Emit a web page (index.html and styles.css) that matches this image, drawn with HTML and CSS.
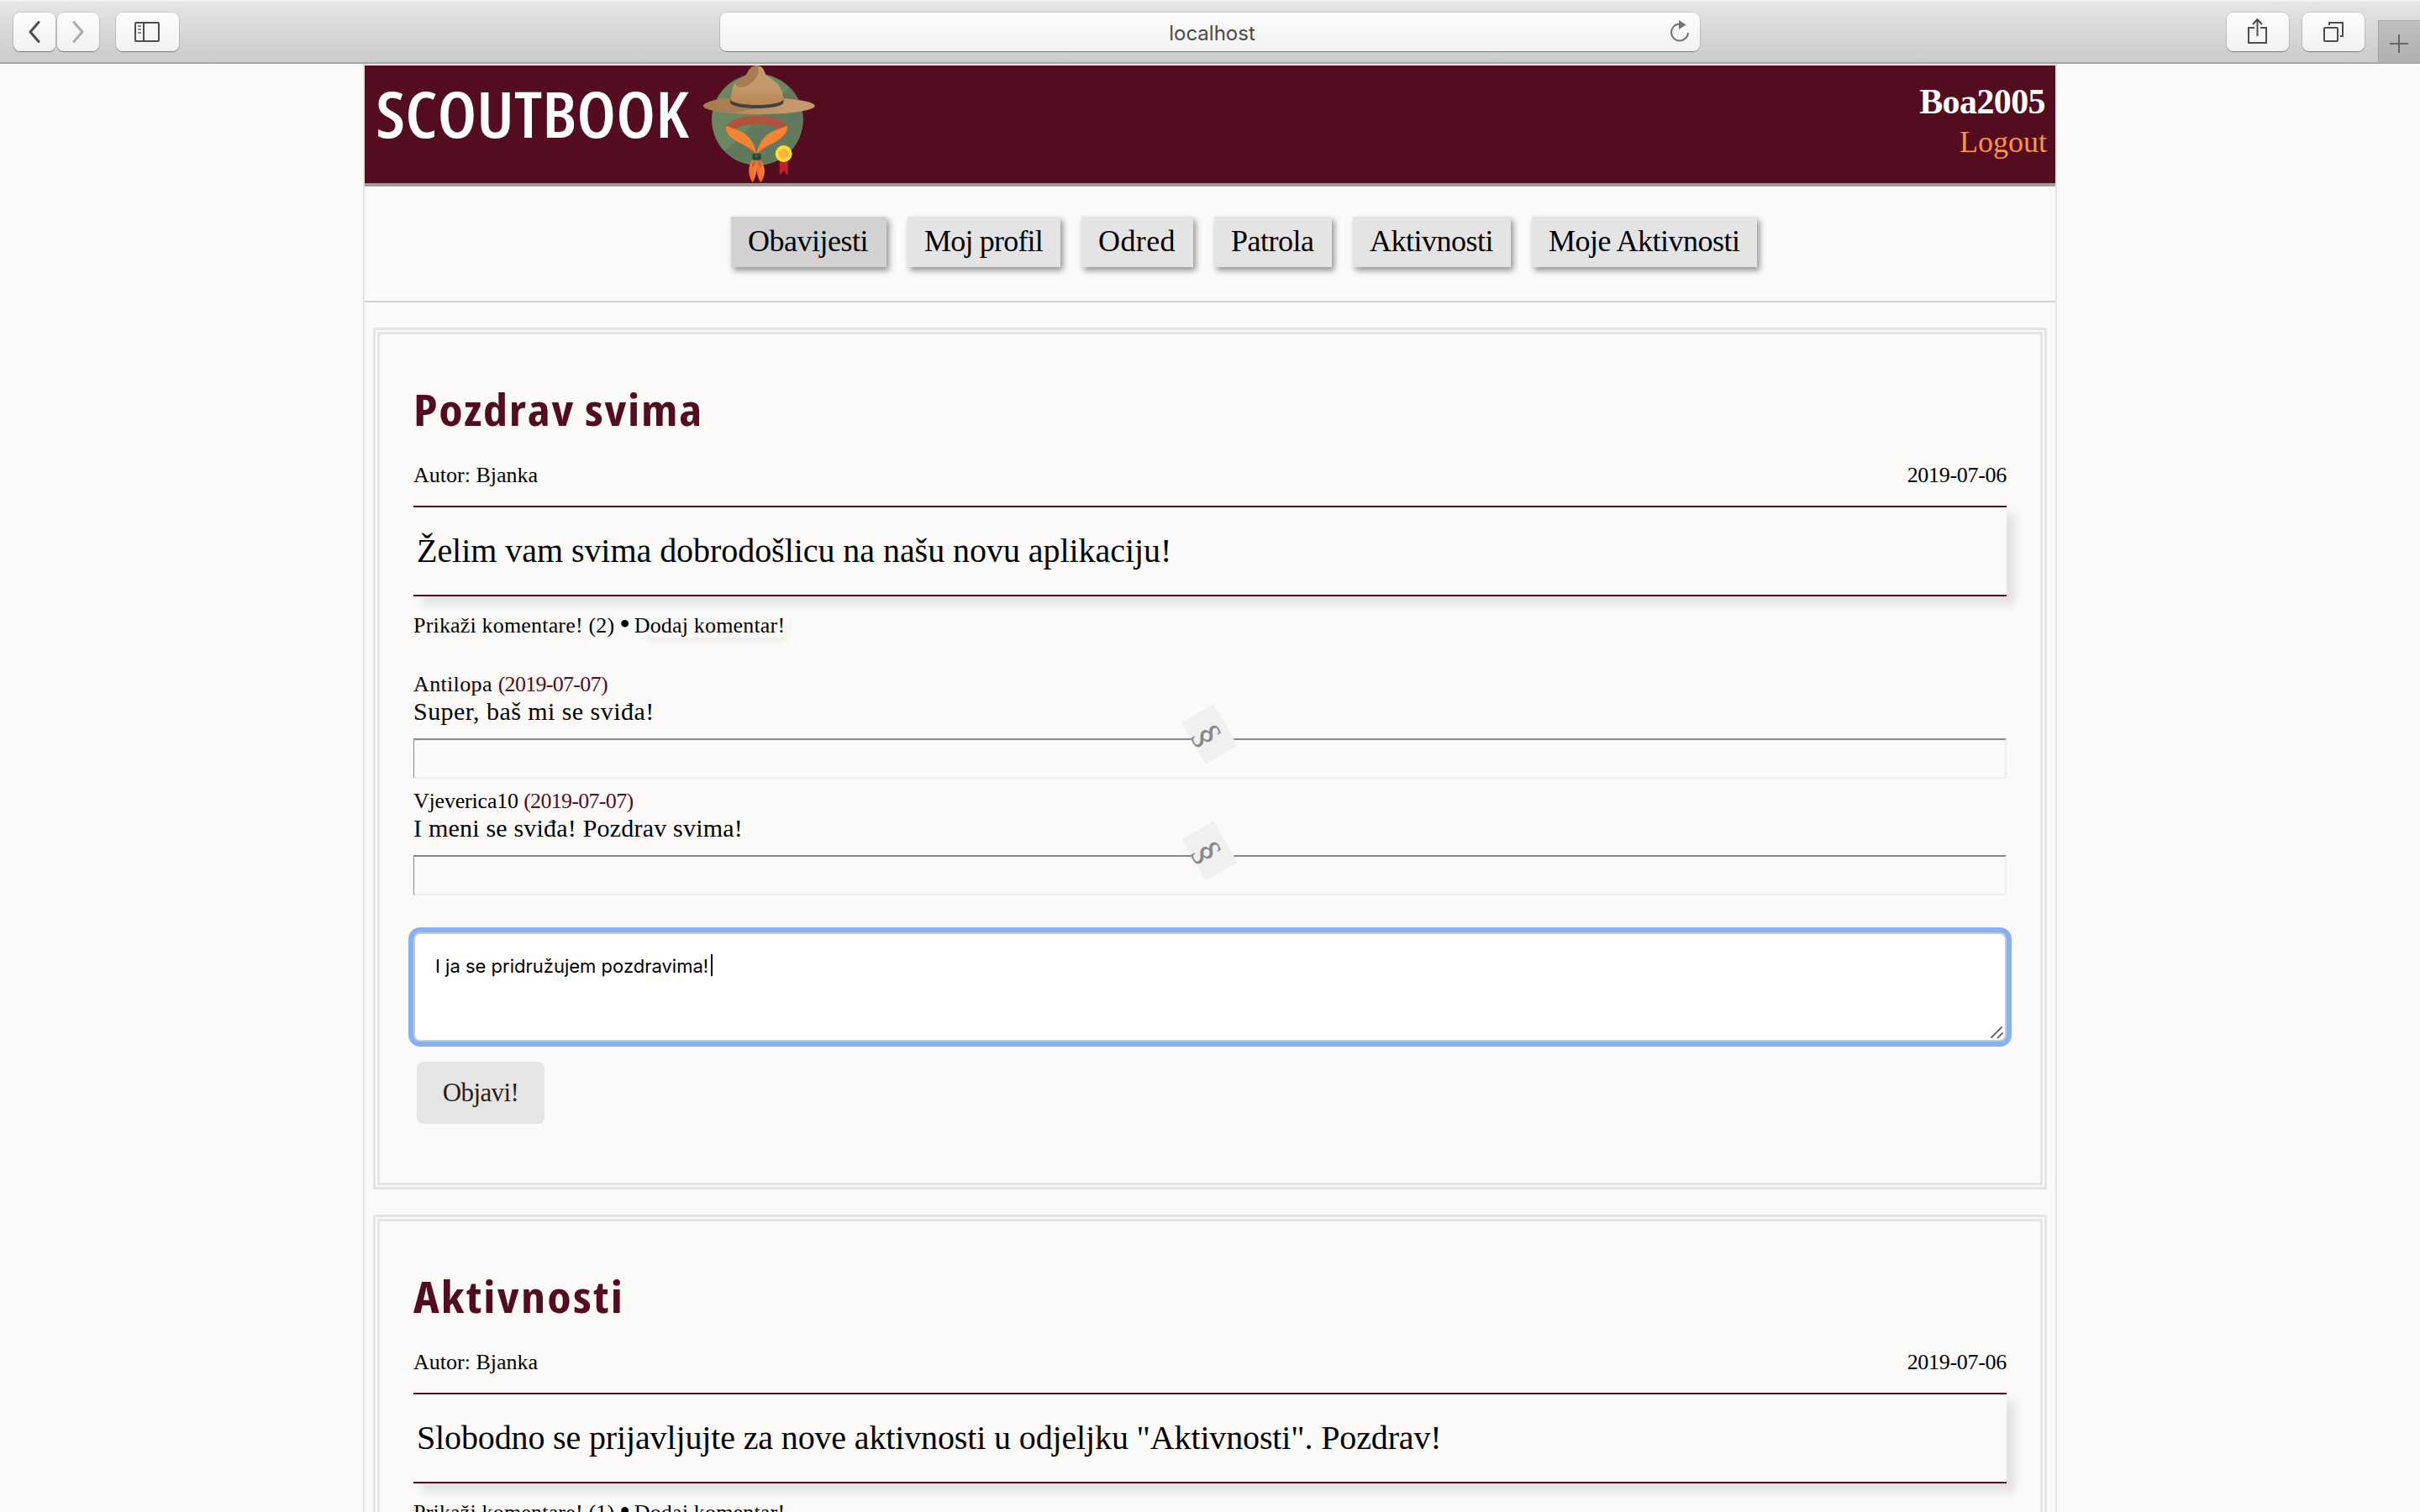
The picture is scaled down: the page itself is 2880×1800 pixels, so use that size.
FILE: index.html
```html
<!DOCTYPE html>
<html lang="hr">
<head>
<meta charset="utf-8">
<title>Scoutbook</title>
<link rel="stylesheet" href="styles.css">
</head>
<body>
<div class="toolbar">
  <div class="toolbar-left">
    <span class="tb-btn nav-arrow"><svg width="50" height="46" viewBox="0 0 50 46"><path d="M30 11.500L20 23L30 34.500" fill="none" stroke="#4d4d4d" stroke-width="3" stroke-linecap="round" stroke-linejoin="round"/></svg></span>
    <span class="tb-btn nav-arrow"><svg width="50" height="46" viewBox="0 0 50 46"><path d="M20 11.500L30 23L20 34.500" fill="none" stroke="#ababab" stroke-width="3" stroke-linecap="round" stroke-linejoin="round"/></svg></span>
    <span class="tb-btn sidebar-btn"><svg width="75" height="46" viewBox="0 0 75 46"><rect x="23" y="12" width="28" height="22" rx="1" fill="none" stroke="#4d4d4d" stroke-width="2"/><path d="M33 12V34" stroke="#4d4d4d" stroke-width="2"/><path d="M26 16h4M26 20h4M26 24h4" stroke="#8a8a8a" stroke-width="2"/></svg></span>
  </div>
  <div class="url">
    <span>localhost</span>
    <svg class="reload" width="24" height="28" viewBox="0 0 24 28"><path d="M12 4.500A10 10 0 1 0 22 15" fill="none" stroke="#737373" stroke-width="2"/><path d="M11 0L19.500 5.500L11 11Z" fill="#737373"/></svg>
  </div>
  <div class="toolbar-right">
    <span class="tb-btn"><svg width="74" height="46" viewBox="0 0 74 46"><path d="M33 18H26V36H47V18H40M36.500 28V8M31 14L36.500 8L42 14" fill="none" stroke="#4d4d4d" stroke-width="2"/></svg></span>
    <span class="tb-btn"><svg width="74" height="46" viewBox="0 0 74 46"><rect x="26" y="18" width="16" height="16" rx="1" fill="none" stroke="#4d4d4d" stroke-width="2"/><path d="M32 15V12H48V28H45" fill="none" stroke="#4d4d4d" stroke-width="2"/></svg></span>
    <span class="new-tab"><svg width="24" height="24" viewBox="0 0 24 24"><path d="M12 1V23M1 12H23" stroke="#666" stroke-width="2"/></svg></span>
  </div>
</div>

<div class="page">
  <header class="header">
    <div class="brand">
      <span class="logo-text">SCOUTBOOK</span>
      <svg class="emblem" width="133" height="140" viewBox="52 54 399 420">
        <defs>
          <linearGradient id="crown" x1="0" y1="0" x2="0" y2="1"><stop offset="0.5" stop-color="#c49a6c"/><stop offset="1" stop-color="#b98556"/></linearGradient>
          <linearGradient id="brim" x1="0" y1="0" x2="1" y2="0"><stop offset="0.3" stop-color="#b98a5c"/><stop offset="0.8" stop-color="#c49a6c"/></linearGradient>
          <linearGradient id="tail" x1="1" y1="0" x2="0" y2="1"><stop offset="0.3" stop-color="#f58235"/><stop offset="1" stop-color="#f15633"/></linearGradient>
          <clipPath id="disc"><circle cx="245" cy="247" r="163"/></clipPath>
        </defs>
        <circle cx="245" cy="247" r="163" fill="#6b8760"/>
        <path d="M358 134L130 360L250 474H451V134Z" fill="#63795b" clip-path="url(#disc)"/>
        <ellipse cx="251" cy="198" rx="199" ry="30" fill="url(#brim)"/>
        <path d="M52 198C56 184 96 172 160 170L240 208L170 223C110 221 55 212 52 198Z" fill="#a87d52"/>
        <path d="M149 182C152 150 157 128 166 115C182 103 200 96 207 85C216 68 222 55 243 55C264 55 268 70 274 84C286 100 307 106 321 122C332 138 337 160 339 182C318 204 171 204 149 182Z" fill="url(#crown)"/>
        <path d="M166 115C182 103 200 96 207 85C216 68 222 52 246 57C254 74 246 94 230 110C210 130 186 136 174 130C167 126 166 120 166 115Z" fill="#a87d52"/>
        <path d="M148 174C158 202 329 202 339 174L338 188C322 213 166 213 148 188Z" fill="#414042"/>
        <path d="M132 277C150 219 330 219 353 276L326 282C290 258 205 257 160 282Z" fill="#b0533c"/>
        <path d="M135 269C150 277 196 286 216 312C230 330 238 348 242 370C222 346 190 336 165 320C142 304 126 287 135 269Z" fill="#f58235"/>
        <path d="M350 269C335 277 288 286 269 312C254 330 245 348 242 370C262 346 295 336 320 320C342 304 357 287 350 269Z" fill="#f58235"/>
        <path d="M205 342Q228 350 240 369Q220 355 205 342M279 342Q256 350 244 369Q264 355 279 342" fill="#dc6c32"/>
        <path d="M230 388C214 405 206 440 228 472C238 455 246 430 243 390Z" fill="url(#tail)"/>
        <path d="M254 388C270 405 280 440 257 472C246 455 238 430 242 390Z" fill="url(#tail)"/>
        <path d="M232 392Q220 404 228 421Q240 410 238 392M253 392Q266 404 258 421Q246 410 247 392" fill="#d4622f"/>
        <rect x="227" y="368" width="31" height="24" rx="5" fill="#1f4d3d"/>
        <circle cx="242" cy="376" r="6" fill="#54595b"/>
        <path d="M324 392H354V448L339 430L324 448Z" fill="#c01f2f"/>
        <circle cx="339" cy="369" r="30" fill="#ffde32"/>
        <circle cx="339" cy="369" r="18" fill="#fbb040"/>
      </svg>
    </div>
    <div class="user">
      <span class="user-name">Boa2005</span>
      <a class="logout">Logout</a>
    </div>
  </header>

  <nav class="nav">
    <a class="nav-item active w1">Obavijesti</a>
    <a class="nav-item w2">Moj profil</a>
    <a class="nav-item w3">Odred</a>
    <a class="nav-item w4">Patrola</a>
    <a class="nav-item w5">Aktivnosti</a>
    <a class="nav-item w6">Moje Aktivnosti</a>
  </nav>

  <main class="feed">
    <article class="post">
      <h2 class="title">Pozdrav svima</h2>
      <div class="meta"><span>Autor: Bjanka</span><span class="date">2019-07-06</span></div>
      <div class="body">Želim vam svima dobrodošlicu na našu novu aplikaciju!</div>
      <div class="links"><a>Prikaži komentare! (2)</a> <b class="dot">•</b> <a class="add hover">Dodaj komentar!</a></div>
      <div class="comments">
        <div class="comment">
          <div class="who">Antilopa <span class="when">(2019-07-07)</span></div>
          <div class="text">Super, baš mi se sviđa!</div>
          <div class="rule"><span class="ornament">§</span></div>
        </div>
        <div class="comment">
          <div class="who tight">Vjeverica10 <span class="when">(2019-07-07)</span></div>
          <div class="text narrow">I meni se sviđa! Pozdrav svima!</div>
          <div class="rule"><span class="ornament">§</span></div>
        </div>
      </div>
      <div class="textarea"><span>I ja se pridružujem pozdravima!</span><i class="caret"></i>
        <svg class="grip" width="16" height="16" viewBox="0 0 16 16"><path d="M1 14L13 2M8.500 14.500L14 9" stroke="#666" stroke-width="1.800" stroke-linecap="round"/></svg>
      </div>
      <button class="submit">Objavi!</button>
    </article>

    <article class="post">
      <h2 class="title second">Aktivnosti</h2>
      <div class="meta"><span>Autor: Bjanka</span><span class="date">2019-07-06</span></div>
      <div class="body long">Slobodno se prijavljujte za nove aktivnosti u odjeljku "Aktivnosti". Pozdrav!</div>
      <div class="links"><a>Prikaži komentare! (1)</a> <b class="dot">•</b> <a class="add">Dodaj komentar!</a></div>
    </article>
  </main>
</div>
</body>
</html>
```
FILE: styles.css
```css
* { box-sizing: border-box; }
html, body { height: 100%; }
body {
  margin: 0;
  display: flex;
  flex-direction: column;
  overflow: hidden;
  background: #fbfaf8;
  color: #000;
  font-family: "Liberation Serif", serif;
}
svg { display: block; }

/* browser toolbar */
.toolbar {
  flex: none;
  height: 76px;
  display: grid;
  grid-template-columns: 1fr 1166px 1fr;
  padding-top: 15px;
  background: linear-gradient(#f4f4f4 0, #f4f4f4 1px, #e5e5e5 2px, #cbcbcb 74px);
  border-bottom: 2px solid #a8a8a8;
}
.toolbar-left { display: flex; padding-left: 16px; }
.toolbar-right { display: flex; justify-content: flex-end; gap: 16px; }
.tb-btn, .url {
  height: 46px;
  background: linear-gradient(#fcfcfc, #f2f2f2);
  border-radius: 8px;
  box-shadow: 0 0 0 1px rgba(0,0,0,.1), 0 1px 1px rgba(0,0,0,.35);
}
.nav-arrow { margin-right: 2px; }
.sidebar-btn { margin-left: 18px; }
.url {
  position: relative;
  display: flex;
  justify-content: center;
  color: #4a4a4a;
  font: 24px/49px Inter, sans-serif;
}
.url span { padding-left: 5px; }
.reload { position: absolute; right: 12px; top: 9px; }
.new-tab {
  width: 50px;
  height: 50px;
  margin-top: 9px;
  padding: 15px 0 0 12px;
  background: linear-gradient(#bfbfbf, #b0b0b0);
  border-left: 1px solid #a3a3a3;
  border-top: 1px solid #a9a9a9;
}

/* page column */
.page {
  flex: 1;
  width: 2016px;
  margin: 0 auto;
  border: 2px solid #e4e4e4;
  border-bottom: 0;
  min-height: 0;
  overflow: hidden;
}
.header {
  height: 144px;
  display: flex;
  justify-content: space-between;
  background: #530c20;
  border-bottom: 4px solid #9e9c99;
}
.brand { display: flex; }
.logo-text {
  width: 403px;
  padding: 6px 0 0 12px;
  color: #fff;
  font: 600 75px/102px "Open Sans", sans-serif;
  font-stretch: condensed;
  white-space: nowrap;
  transform: scaleX(1.1);
  transform-origin: left;
}
.user {
  display: flex;
  flex-direction: column;
  align-items: flex-end;
  gap: 4px;
  padding: 21px 10px 0 0;
}
.user-name { padding-right: 2px; color: #fff; font-weight: bold; font-size: 42px; line-height: 44px; letter-spacing: -.6px; }
.logout { color: #ff9248; font-size: 36px; line-height: 44px; }

.nav {
  height: 138px;
  display: flex;
  gap: 25px;
  padding: 36px 0 0 436px;
  border-bottom: 2px solid #d2d2d2;
}
.nav-item {
  height: 60px;
  padding: 0 0 2px 20px;
  background: #e4e4e4;
  box-shadow: 3px 4px 7px rgba(0,0,0,.42);
  font-size: 36px;
  line-height: 58px;
  letter-spacing: -.5px;
  white-space: nowrap;
}
.active { background: #d2d2d2; }
.w1 { width: 185px; }
.w2 { width: 182px; letter-spacing: -.8px; }
.w3 { width: 133px; letter-spacing: .4px; }
.w4 { width: 140px; }
.w5 { width: 188px; }
.w6 { width: 268px; }

.feed { display: flex; flex-direction: column; gap: 30px; padding: 30px 10px 0; }
.post { border: 8px double #e4e4e4; padding: 59px 40px 70px; }
.title {
  margin: 0;
  color: #530c20;
  font: 700 52px/60px "Open Sans", sans-serif;
  font-stretch: condensed;
  letter-spacing: 1.5px;
  transform: scaleX(1.12);
  transform-origin: left;
}
.second { letter-spacing: 2px; }
.meta { display: flex; justify-content: space-between; margin-top: 29px; font-size: 26px; line-height: 40px; }
.date { letter-spacing: -.3px; }
.body {
  height: 108px;
  margin-top: 16px;
  padding-left: 4px;
  border-top: 2px solid #530c20;
  border-bottom: 2px solid #530c20;
  box-shadow: 10px 10px 10px #e2e2e2;
  font-size: 40px;
  line-height: 103px;
  letter-spacing: -.05px;
}
.long { letter-spacing: -.14px; }
.links { margin-top: 19px; font-size: 26px; line-height: 30px; letter-spacing: .18px; }
.dot { display: inline-block; width: 10px; font-size: 32px; line-height: 26px; }
.hover { box-shadow: 8px 10px 6px -6px #eeedec; }

.comments { display: flex; flex-direction: column; gap: 12px; margin-top: 40px; }
.who { font-size: 26px; line-height: 30px; letter-spacing: .35px; }
.when { color: #530c20; letter-spacing: -.7px; }
.tight { letter-spacing: -.2px; }
.text { margin: 1px 0 16px; font-size: 30px; line-height: 32px; letter-spacing: .45px; }
.narrow { letter-spacing: .2px; }
.rule {
  position: relative;
  height: 48px;
  border: 2px solid;
  border-color: #888 #eee #eee #888;
  border-left-width: 1px;
}
.ornament {
  position: absolute;
  left: 918px;
  top: -29px;
  width: 57px;
  height: 44px;
  background: #f0f0f0;
  color: #888;
  font-size: 44px;
  line-height: 49px;
  text-align: center;
  transform: rotate(60deg);
}

.textarea {
  position: relative;
  display: flex;
  height: 130px;
  margin-top: 44px;
  padding: 24px;
  background: #fff;
  border: 2px solid #c8c8c8;
  border-radius: 8px;
  box-shadow: 0 0 0 6px #86b1f5;
  font: 22px/28px Inter, sans-serif;
}
.caret { width: 2px; height: 26px; margin-left: 3px; background: #000; }
.grip { position: absolute; right: 1px; bottom: 1px; }
.submit {
  display: block;
  width: 152px;
  height: 74px;
  margin: 24px 0 0 4px;
  padding: 0;
  border: 0;
  border-radius: 8px;
  background: #e5e5e5;
  color: #222;
  font: 31px "Liberation Serif", serif;
  letter-spacing: -.6px;
}
```
